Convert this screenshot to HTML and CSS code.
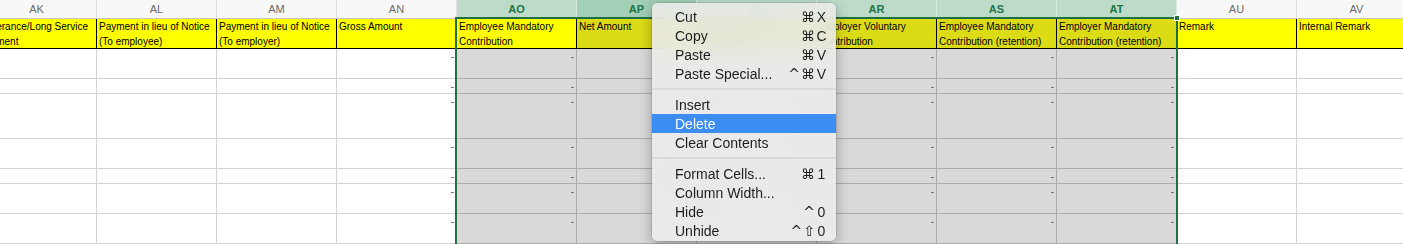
FILE: index.html
```html
<!DOCTYPE html>
<html lang="en">
<head>
    <meta charset="UTF-8">
    <title>Payroll Sheet - Column Menu</title>
    <link rel="stylesheet" href="styles.css">
</head>
<body>
    <div class="sheet">
        <div class="row letters">
            <div class="cell">AK</div>
            <div class="cell">AL</div>
            <div class="cell">AM</div>
            <div class="cell">AN</div>
            <div class="cell sel">AO</div>
            <div class="cell sel cur">AP</div>
            <div class="cell sel">AQ</div>
            <div class="cell sel">AR</div>
            <div class="cell sel">AS</div>
            <div class="cell sel">AT</div>
            <div class="cell">AU</div>
            <div class="cell">AV</div>
        </div>

        <div class="row head">
            <div class="cell">Severance/Long Service Payment</div>
            <div class="cell">Payment in lieu of Notice (To employee)</div>
            <div class="cell">Payment in lieu of Notice (To employer)</div>
            <div class="cell">Gross Amount</div>
            <div class="cell">Employee Mandatory Contribution</div>
            <div class="cell sel">Net Amount</div>
            <div class="cell sel">Employer Mandatory Contribution</div>
            <div class="cell sel">Employer Voluntary Contribution</div>
            <div class="cell sel">Employee Mandatory Contribution (retention)</div>
            <div class="cell sel">Employer Mandatory Contribution (retention)</div>
            <div class="cell">Remark</div>
            <div class="cell">Internal Remark</div>
        </div>

        <div class="row h30">
            <div class="cell"></div><div class="cell"></div><div class="cell"></div>
            <div class="cell num">-</div>
            <div class="cell sel num">-</div><div class="cell sel num">-</div><div class="cell sel num">-</div>
            <div class="cell sel num">-</div><div class="cell sel num">-</div><div class="cell sel num">-</div>
            <div class="cell"></div><div class="cell"></div>
        </div>

        <div class="row h15">
            <div class="cell"></div><div class="cell"></div><div class="cell"></div>
            <div class="cell num">-</div>
            <div class="cell sel num">-</div><div class="cell sel num">-</div><div class="cell sel num">-</div>
            <div class="cell sel num">-</div><div class="cell sel num">-</div><div class="cell sel num">-</div>
            <div class="cell"></div><div class="cell"></div>
        </div>

        <div class="row h45">
            <div class="cell"></div><div class="cell"></div><div class="cell"></div>
            <div class="cell num">-</div>
            <div class="cell sel num">-</div><div class="cell sel num">-</div><div class="cell sel num">-</div>
            <div class="cell sel num">-</div><div class="cell sel num">-</div><div class="cell sel num">-</div>
            <div class="cell"></div><div class="cell"></div>
        </div>

        <div class="row h30">
            <div class="cell"></div><div class="cell"></div><div class="cell"></div>
            <div class="cell num">-</div>
            <div class="cell sel num">-</div><div class="cell sel num">-</div><div class="cell sel num">-</div>
            <div class="cell sel num">-</div><div class="cell sel num">-</div><div class="cell sel num">-</div>
            <div class="cell"></div><div class="cell"></div>
        </div>

        <div class="row h15">
            <div class="cell"></div><div class="cell"></div><div class="cell"></div>
            <div class="cell num">-</div>
            <div class="cell sel num">-</div><div class="cell sel num">-</div><div class="cell sel num">-</div>
            <div class="cell sel num">-</div><div class="cell sel num">-</div><div class="cell sel num">-</div>
            <div class="cell"></div><div class="cell"></div>
        </div>

        <div class="row h30">
            <div class="cell"></div><div class="cell"></div><div class="cell"></div>
            <div class="cell num">-</div>
            <div class="cell sel num">-</div><div class="cell sel num">-</div><div class="cell sel num">-</div>
            <div class="cell sel num">-</div><div class="cell sel num">-</div><div class="cell sel num">-</div>
            <div class="cell"></div><div class="cell"></div>
        </div>

        <div class="row h30">
            <div class="cell"></div><div class="cell"></div><div class="cell"></div>
            <div class="cell num">-</div>
            <div class="cell sel num">-</div><div class="cell sel num">-</div><div class="cell sel num">-</div>
            <div class="cell sel num">-</div><div class="cell sel num">-</div><div class="cell sel num">-</div>
            <div class="cell"></div><div class="cell"></div>
        </div>
    </div>

    <!-- selected range AO:AT -->
    <div class="selection"></div>

    <div class="menu">
        <div class="item"><span class="label">Cut</span><span class="mods">⌘</span><span class="key">X</span></div>
        <div class="item"><span class="label">Copy</span><span class="mods">⌘</span><span class="key">C</span></div>
        <div class="item"><span class="label">Paste</span><span class="mods">⌘</span><span class="key">V</span></div>
        <div class="item"><span class="label">Paste Special...</span><span class="mods">^⌘</span><span class="key">V</span></div>
        <div class="sep"></div>
        <div class="item"><span class="label">Insert</span></div>
        <div class="item hl"><span class="label">Delete</span></div>
        <div class="item"><span class="label">Clear Contents</span></div>
        <div class="sep"></div>
        <div class="item"><span class="label">Format Cells...</span><span class="mods">⌘</span><span class="key">1</span></div>
        <div class="item"><span class="label">Column Width...</span></div>
        <div class="item"><span class="label">Hide</span><span class="mods">^</span><span class="key">0</span></div>
        <div class="item"><span class="label">Unhide</span><span class="mods">^⇧</span><span class="key">0</span></div>
    </div>
</body>
</html>
```

FILE: styles.css
```css
body {
    margin: 0;
    height: 244px;
    overflow: hidden;
    position: relative;
    background: #fff;
    font-family: "Liberation Sans", Arial, sans-serif;
}

.sheet {
    margin-left: -23px;
    width: 1440px;
}

.row {
    display: grid;
    grid-template-columns: repeat(12, 120px);
}

.cell {
    box-sizing: border-box;
    border-right: 1px solid #d4d4d4;
    border-bottom: 1px solid #d4d4d4;
    overflow: hidden;
}

/* column letters */
.letters {
    height: 19px;
}

.letters .cell {
    background: #f8f8f8;
    color: #6b6b6b;
    font-size: 11px;
    line-height: 18px;
    text-align: center;
    border-right-color: #dedede;
    border-bottom-color: #c6c6c6;
}

.letters .sel {
    background: #bcdcc9;
    color: #217346;
    font-weight: bold;
    border-right-color: #d6ecdf;
}

.letters .cur {
    background: #a2cfb5;
}

/* yellow header row */
.head {
    height: 30px;
}

.head .cell {
    background: #ffff00;
    color: #000;
    font-size: 10px;
    line-height: 15px;
    padding-left: 2px;
    border-right-color: #000;
    border-bottom-color: #000;
}

.head .sel {
    background: #dcdc16;
}

/* data rows */
.h15 { height: 15px; }
.h30 { height: 30px; }
.h45 { height: 45px; }

.num {
    text-align: right;
    padding-right: 2px;
    font-size: 10px;
    line-height: 15px;
    color: #555;
}

.h15 .sel,
.h30 .sel,
.h45 .sel {
    background: #d9d9d9;
    border-color: #adadad;
}

.selection {
    position: absolute;
    left: 455px;
    top: 17px;
    width: 723px;
    height: 240px;
    box-sizing: border-box;
    border: 2px solid #1f6f43;
}

.selection::after {
    content: '';
    position: absolute;
    right: -4px;
    top: -4px;
    width: 4px;
    height: 4px;
    background: #1f6f43;
    border: 1px solid #fff;
}

/* context menu */
.menu {
    position: absolute;
    left: 652px;
    top: 3px;
    width: 184px;
    box-sizing: border-box;
    padding: 4px 0 1px;
    background: rgba(236, 236, 236, 0.88);
    backdrop-filter: blur(12px);
    border-radius: 5px;
    box-shadow: 0 0 0 0.5px rgba(0,0,0,0.18), 0 4px 14px rgba(0,0,0,0.3);
    font-size: 14px;
    color: #1d1d1d;
}

.item {
    display: flex;
    align-items: center;
    height: 19px;
    padding: 0 9px 0 23px;
}

.item .label {
    flex: 1;
}

.item .mods {
    font-family: "DejaVu Sans", sans-serif;
    font-size: 14px;
    letter-spacing: 1px;
}

.item .key {
    width: 11px;
    text-align: center;
}

.item.hl {
    background: #3c8df6;
    color: #fff;
}

.sep {
    height: 2px;
    margin: 5px 0;
    background: #d9d9d9;
}
```
